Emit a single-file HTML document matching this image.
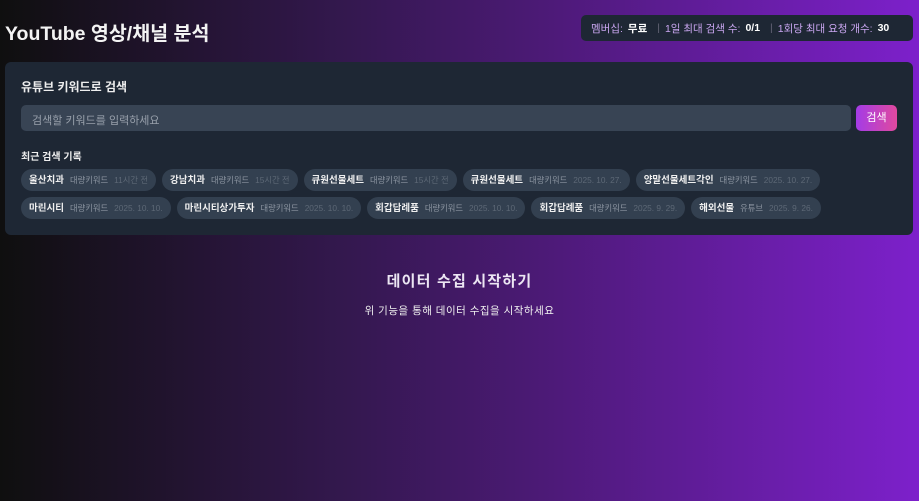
<!DOCTYPE html>
<html><head><meta charset="utf-8"><style>
*{box-sizing:border-box;margin:0;padding:0}
body{width:919px;height:501px;overflow:hidden;background:linear-gradient(to right,#0f0f0f 0%,#34184f 38%,#4d1a78 60%,#7d20cb 100%);font-family:"Liberation Sans","Noto Sans CJK KR",sans-serif;color:#fff;position:relative}
h1{position:absolute;left:5px;top:17px;font-size:19.5px;font-weight:bold;color:#f3f3f3}
.mem{position:absolute;left:581px;top:15px;width:332px;height:26px;background:#1e2734;border-radius:5px;font-size:10.5px;color:#c9a6f0;display:flex;align-items:center;padding-left:10px;white-space:nowrap}
.mem b{color:#fff;margin-left:5px}
.mem .sep{color:#667;margin:0 5px}
.card{position:absolute;left:5px;top:62px;width:908px;height:173px;background:#1e2734;border-radius:6px}
.t{position:absolute;left:16px;top:16px;font-size:12px;font-weight:bold;color:#eee}
.inp{position:absolute;left:16px;top:43px;width:830px;height:26px;background:#384454;border-radius:5px;font-size:11px;color:#98a0ab;padding:7px 0 0 11px}
.btn{position:absolute;left:851px;top:43px;width:41px;height:26px;border-radius:5px;background:linear-gradient(to right,#a43ce6,#e0499f);font-size:11px;color:#fff;text-align:center;line-height:26px}
.rt{position:absolute;left:16px;top:86px;font-size:10px;font-weight:bold;color:#eee}
.chips{position:absolute;left:16px;top:107px;width:880px;display:flex;flex-wrap:wrap;gap:6px 6px}
.c{height:22px;background:#334050;border-radius:11px;padding:0 8px;font-size:9.5px;line-height:22px;white-space:nowrap;font-weight:bold;color:#f0f0f0}
.c span{font-weight:normal;color:#8c95a1;font-size:8.3px;margin-left:6px}
.c i{font-style:normal;font-weight:normal;color:#5d6876;font-size:8.3px;margin-left:6px}
.e1{position:absolute;left:0;width:919px;top:270px;text-align:center;font-size:15px;font-weight:bold;color:#ece6f3;letter-spacing:1.2px}
.e2{position:absolute;left:0;width:919px;top:303px;text-align:center;font-size:10.5px;color:#f0f0f0;letter-spacing:0.5px}
</style></head><body>
<h1>YouTube 영상/채널 분석</h1>
<div class="mem">멤버십: <b>무료</b><span class="sep" style="margin-left:10px">|</span>1일 최대 검색 수: <b>0/1</b><span class="sep" style="margin-left:10px">|</span>1회당 최대 요청 개수: <b>30</b></div>
<div class="card">
<div class="t">유튜브 키워드로 검색</div>
<div class="inp">검색할 키워드를 입력하세요</div>
<div class="btn">검색</div>
<div class="rt">최근 검색 기록</div>
<div class="chips">
<div class="c">울산치과<span>대량키워드</span><i>11시간 전</i></div>
<div class="c">강남치과<span>대량키워드</span><i>15시간 전</i></div>
<div class="c">큐원선물세트<span>대량키워드</span><i>15시간 전</i></div>
<div class="c">큐원선물세트<span>대량키워드</span><i>2025. 10. 27.</i></div>
<div class="c">양말선물세트각인<span>대량키워드</span><i>2025. 10. 27.</i></div>
<div class="c">마린시티<span>대량키워드</span><i>2025. 10. 10.</i></div>
<div class="c">마린시티상가투자<span>대량키워드</span><i>2025. 10. 10.</i></div>
<div class="c">회갑답례품<span>대량키워드</span><i>2025. 10. 10.</i></div>
<div class="c">회갑답례품<span>대량키워드</span><i>2025. 9. 29.</i></div>
<div class="c">해외선물<span>유튜브</span><i>2025. 9. 26.</i></div>
</div>
</div>
<div class="e1">데이터 수집 시작하기</div>
<div class="e2">위 기능을 통해 데이터 수집을 시작하세요</div>
</body></html>
